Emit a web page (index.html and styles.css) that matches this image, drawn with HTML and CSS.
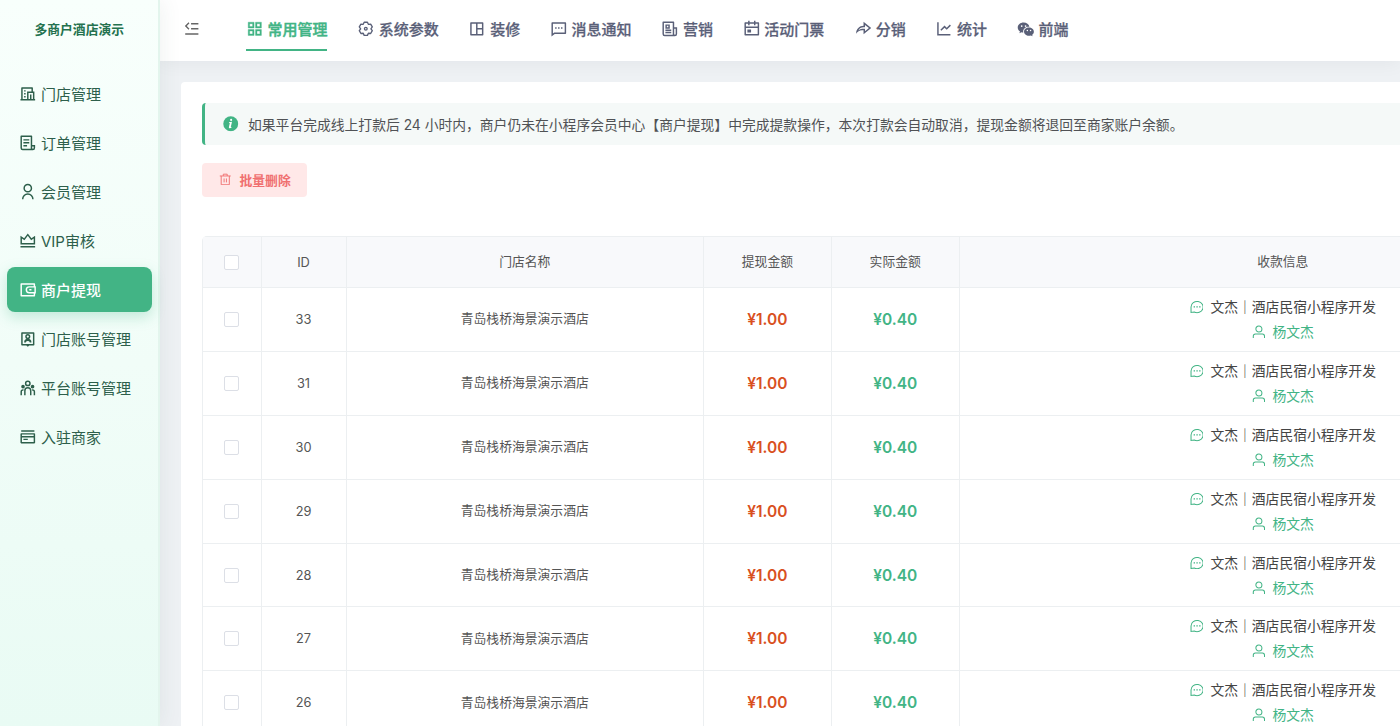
FILE: index.html
```html
<!DOCTYPE html>
<html lang="zh-CN">
<head>
  <meta charset="UTF-8">
  <title>商户提现</title>
  <link rel="stylesheet" href="styles.css">
</head>
<body>
  <svg class="sprite">
    <symbol id="i-fold" viewBox="0 0 24 24"><path d="M11 4h10v2H11zM11 11h10v2H11zM3 18h18v2H3zM7.500 3.200 8.800 4.600 5.200 8.200l3.600 3.600-1.300 1.400-5-5z"/></symbol>
    <symbol id="i-building" viewBox="0 0 24 24"><path d="M22 21H2v-2h1V4a1 1 0 0 1 1-1h14a1 1 0 0 1 1 1v5h2v10h1v2zm-5-2h2v-8h-6v8h2v-6h2v6zm0-10V5H5v14h6V9h6zM7 11h2v2H7v-2zm0 4h2v2H7v-2zm0-8h2v2H7V7z"/></symbol>
    <symbol id="i-bill" viewBox="0 0 24 24"><path d="M19 22H5a3 3 0 0 1-3-3V3a1 1 0 0 1 1-1h14a1 1 0 0 1 1 1v12h4v4a3 3 0 0 1-3 3zm-1-5v2a1 1 0 0 0 2 0v-2h-2zm-2 3V4H4v15a1 1 0 0 0 1 1h11zM6 7h8v2H6V7zm0 4h8v2H6v-2zm0 4h5v2H6v-2z"/></symbol>
    <symbol id="i-user" viewBox="0 0 24 24"><path d="M4 22a8 8 0 1 1 16 0h-2a6 6 0 1 0-12 0H4zm8-9c-3.315 0-6-2.685-6-6s2.685-6 6-6 6 2.685 6 6-2.685 6-6 6zm0-2c2.210 0 4-1.790 4-4s-1.790-4-4-4-4 1.790-4 4 1.790 4 4 4z"/></symbol>
    <symbol id="i-vip" viewBox="0 0 24 24"><path d="M2 19h20v2H2v-2zM2 5l5 3.500L12 2l5 6.500L22 5v12H2V5zm2 3.840V15h16V8.840l-3.420 2.390L12 5.280l-4.580 5.950L4 8.840z"/></symbol>
    <symbol id="i-wallet" viewBox="0 0 24 24"><path d="M22 7h1v10h-1v3a1 1 0 0 1-1 1H3a1 1 0 0 1-1-1V4a1 1 0 0 1 1-1h18a1 1 0 0 1 1 1v3zm-2 10h-6a5 5 0 0 1 0-10h6V5H4v14h16v-2zm1-2V9h-7a3 3 0 0 0 0 6h7zm-7-4h3v2h-3v-2z"/></symbol>
    <symbol id="i-badge" viewBox="0 0 24 24"><path d="M14 21l-2 2-2-2H4a1 1 0 0 1-1-1V4a1 1 0 0 1 1-1h16a1 1 0 0 1 1 1v16a1 1 0 0 1-1 1h-6zm5-2V5H5v14h14zM7 17a5 5 0 0 1 10 0h-2.200a3 3 0 0 0-5.600 0H7zm5-4.500a3.500 3.500 0 1 1 0-7 3.500 3.500 0 0 1 0 7zm0-2a1.500 1.500 0 1 0 0-3 1.500 1.500 0 0 0 0 3z"/></symbol>
    <symbol id="i-team" viewBox="0 0 24 24"><path d="M12 11a5 5 0 0 1 5 5v6h-2v-6a3 3 0 0 0-6 0v6H7v-6a5 5 0 0 1 5-5zm-6.500 3q.42 0 .81.090A6 6 0 0 0 6 16v.100A1.500 1.500 0 0 0 4 17.500V22H2v-4.500A3.500 3.500 0 0 1 5.500 14zm13 0a3.500 3.500 0 0 1 3.500 3.500V22h-2v-4.500a1.500 1.500 0 0 0-2-1.410V16q0-1-.310-1.910.4-.090.810-.090zM5.500 8a2.500 2.500 0 1 1 0 5 2.500 2.500 0 0 1 0-5zm13 0a2.500 2.500 0 1 1 0 5 2.500 2.500 0 0 1 0-5zM12 2a4 4 0 1 1 0 8 4 4 0 0 1 0-8zm0 2a2 2 0 1 0 0 4 2 2 0 0 0 0-4z"/></symbol>
    <symbol id="i-store" viewBox="0 0 24 24"><path fill-rule="evenodd" d="M3 3h18v2H3zM3 7h18l1 1v12l-1 1H3l-1-1V8zm1 2v2h16V9zm0 4v6h16v-6zm2 1.500h6v2H6z"/></symbol>
    <symbol id="i-function" viewBox="0 0 24 24"><path fill-rule="evenodd" d="M3 3h8v8H3zm2 2v4h4V5zM13 3h8v8h-8zm2 2v4h4V5zM3 13h8v8H3zm2 2v4h4v-4zM13 13h8v8h-8zm2 2v4h4v-4z"/></symbol>
    <symbol id="i-gear" viewBox="-1 -1 26 26"><path fill="none" stroke="currentColor" stroke-width="2" stroke-linejoin="round" d="M9.600 2.300h4.800L15.800 5.400 19.200 5.070 21.600 9.230 19.600 12 21.600 14.770 19.200 18.930 15.800 18.600 14.400 21.700H9.600L8.200 18.600 4.800 18.930 2.400 14.770 4.400 12 2.400 9.230 4.800 5.070 8.200 5.400z"/><circle cx="12" cy="12" r="2" fill="none" stroke="currentColor" stroke-width="2"/></symbol>
    <symbol id="i-layout" viewBox="0 0 24 24"><path fill-rule="evenodd" d="M4 3h16a1 1 0 0 1 1 1v16a1 1 0 0 1-1 1H4a1 1 0 0 1-1-1V4a1 1 0 0 1 1-1zm7 2H5v14h6zm2 0v6h6V5zm0 8v6h6v-6z"/></symbol>
    <symbol id="i-message" viewBox="0 0 24 24"><path d="M6.450 19 2 22.500V4a1 1 0 0 1 1-1h18a1 1 0 0 1 1 1v14a1 1 0 0 1-1 1H6.450zm-.690-2H20V5H4v13.380L5.760 17zM11 10h2v2h-2v-2zm-4 0h2v2H7v-2zm8 0h2v2h-2v-2z"/></symbol>
    <symbol id="i-news" viewBox="0 0 24 24"><path d="M16 20V4H4v15a1 1 0 0 0 1 1h11zm3 2H5a3 3 0 0 1-3-3V3a1 1 0 0 1 1-1h14a1 1 0 0 1 1 1v7h4v9a3 3 0 0 1-3 3zm-1-10v7a1 1 0 0 0 2 0v-7h-2zM6 6h6v6H6V6zm2 2v2h2V8H8zm-2 5h8v2H6v-2zm0 3h8v2H6v-2z"/></symbol>
    <symbol id="i-calendar" viewBox="0 0 24 24"><path d="M17 3h4a1 1 0 0 1 1 1v16a1 1 0 0 1-1 1H3a1 1 0 0 1-1-1V4a1 1 0 0 1 1-1h4V1h2v2h6V1h2v2zm3 6V5h-3v2h-2V5H9v2H7V5H4v4h16zm0 2H4v8h16v-8zM6 13h5v4H6v-4z"/></symbol>
    <symbol id="i-share" viewBox="0 0 24 24"><path d="M13 14h-2a9 9 0 0 0-7.970 4.810A10 10 0 0 1 3 18C3 12.480 7.480 8 13 8V2.500l10.500 8.500L13 19.500V14zm-2-2h4v3.310L20.320 11 15 6.690V10h-2a8 8 0 0 0-7.060 4.220A11 11 0 0 1 11 12z"/></symbol>
    <symbol id="i-chart" viewBox="0 0 24 24"><path d="M5 3v16h16v2H3V3h2zm15.300 3.300 1.400 1.400L16 13.420l-3-3-4.300 4.300-1.400-1.420L13 7.580l3 3 4.300-4.280z"/></symbol>
    <symbol id="i-wechat" viewBox="0 0 24 24"><path fill-rule="evenodd" d="M9 3.500c4.100 0 7.400 2.500 7.900 5.800h-.8c-4.300 0-7.700 2.900-7.700 6.400 0 .5.100 1 .2 1.400-1-.1-1.800-.2-2.600-.5L3.300 18l.7-2.500C2.200 14.300 1 12.500 1 10.500c0-3.900 3.500-7 8-7zM6.400 7a1.200 1.200 0 1 0 0 2.400 1.200 1.200 0 0 0 0-2.400zm5.300 0a1.200 1.200 0 1 0 0 2.400 1.200 1.200 0 0 0 0-2.400zM16.300 10.300c3.700 0 6.700 2.500 6.700 5.600 0 1.700-.9 3.200-2.300 4.200l.5 2-2.300-1.100c-.8.300-1.700.4-2.600.4-3.700 0-6.700-2.500-6.700-5.500s3-5.600 6.700-5.600zm-2.200 3a1 1 0 1 0 0 2 1 1 0 0 0 0-2zm4.400 0a1 1 0 1 0 0 2 1 1 0 0 0 0-2z"/></symbol>
    <symbol id="i-info" viewBox="0 0 16 16"><circle cx="8" cy="8" r="7.700"/><path fill="#fff" d="M8.400 2.900a1.100 1.100 0 1 1 0 2.200 1.100 1.100 0 0 1 0-2.200zM6.200 6.500 9.300 6 8.100 11.200c-.1.500.3.500 1 0l-.2.700c-1.500 1.300-3.200.9-2.800-.6l.9-3.700c.1-.4 0-.5-.9-.5z"/></symbol>
    <symbol id="i-trash" viewBox="0 0 16 16"><path fill="none" stroke="currentColor" stroke-width="1.200" d="M1 3.800h14M5.500 3.800V1.500h5v2.300M2.800 3.800v11.200h10.400V3.800M6.500 7v5M9.500 7v5"/></symbol>
    <symbol id="i-chat" viewBox="0 0 16 16"><path fill="none" stroke="currentColor" stroke-width="1.200" d="M1.200 14.500V8a7 6.500 0 1 1 3.700 5.900z"/><path d="M4.200 7.200h1.600v1.600H4.200zM7.400 7.200H9v1.600H7.400zM10.600 7.200h1.600v1.600h-1.600z"/></symbol>
    <symbol id="i-person" viewBox="0 0 16 16"><path fill="none" stroke="currentColor" stroke-width="1.200" d="M8 1.200a3.500 3.500 0 1 1 0 7 3.500 3.500 0 0 1 0-7zM1.500 15v-2a2.500 2.500 0 0 1 2.500-2.500h8a2.500 2.500 0 0 1 2.500 2.500v2"/></symbol>
  </svg>

  <div class="layout">
    <aside class="sidebar">
      <div class="logo">多商户酒店演示</div>
      <nav class="menu">
        <a class="menu-item"><svg class="icon"><use href="#i-building"/></svg>门店管理</a>
        <a class="menu-item"><svg class="icon"><use href="#i-bill"/></svg>订单管理</a>
        <a class="menu-item"><svg class="icon"><use href="#i-user"/></svg>会员管理</a>
        <a class="menu-item"><svg class="icon"><use href="#i-vip"/></svg>VIP审核</a>
        <a class="menu-item active"><svg class="icon"><use href="#i-wallet"/></svg>商户提现</a>
        <a class="menu-item"><svg class="icon"><use href="#i-badge"/></svg>门店账号管理</a>
        <a class="menu-item"><svg class="icon"><use href="#i-team"/></svg>平台账号管理</a>
        <a class="menu-item"><svg class="icon"><use href="#i-store"/></svg>入驻商家</a>
      </nav>
    </aside>

    <div class="main">
      <header class="topbar">
        <svg class="icon fold"><use href="#i-fold"/></svg>
        <nav class="tabs">
          <a class="tab active"><svg class="icon"><use href="#i-function"/></svg>常用管理</a>
          <a class="tab"><svg class="icon"><use href="#i-gear"/></svg>系统参数</a>
          <a class="tab"><svg class="icon"><use href="#i-layout"/></svg>装修</a>
          <a class="tab"><svg class="icon"><use href="#i-message"/></svg>消息通知</a>
          <a class="tab"><svg class="icon"><use href="#i-news"/></svg>营销</a>
          <a class="tab"><svg class="icon"><use href="#i-calendar"/></svg>活动门票</a>
          <a class="tab"><svg class="icon"><use href="#i-share"/></svg>分销</a>
          <a class="tab"><svg class="icon"><use href="#i-chart"/></svg>统计</a>
          <a class="tab"><svg class="icon"><use href="#i-wechat"/></svg>前端</a>
        </nav>
      </header>

      <section class="card">
        <div class="notice">
          <svg class="notice-icon"><use href="#i-info"/></svg>
          <span>如果平台完成线上打款后 24 小时内，商户仍未在小程序会员中心【商户提现】中完成提款操作，本次打款会自动取消，提现金额将退回至商家账户余额。</span>
        </div>
        <button class="delete-btn" type="button"><svg class="btn-icon"><use href="#i-trash"/></svg>批量删除</button>

        <table class="list">
          <colgroup><col class="c-check"><col class="c-id"><col class="c-name"><col class="c-money"><col class="c-money"><col class="c-payee"></colgroup>
          <thead>
            <tr><th><span class="check"></span></th><th>ID</th><th class="zh">门店名称</th><th class="zh">提现金额</th><th class="zh">实际金额</th><th class="zh">收款信息</th></tr>
          </thead>
          <tbody id="rows"></tbody>
        </table>
      </section>
    </div>
  </div>

  <script>
    const ids = [33, 31, 30, 29, 28, 27, 26];

    document.getElementById("rows").innerHTML = ids.map(id => `
      <tr>
        <td><span class="check"></span></td>
        <td>${id}</td>
        <td class="zh">青岛栈桥海景演示酒店</td>
        <td class="money apply">¥1.00</td>
        <td class="money actual">¥0.40</td>
        <td>
          <div class="payee"><svg><use href="#i-chat"/></svg><span>文杰｜酒店民宿小程序开发</span></div>
          <div class="payee name"><svg><use href="#i-person"/></svg><span>杨文杰</span></div>
        </td>
      </tr>`).join("");
  </script>
</body>
</html>
```
FILE: styles.css
```css
* {
  box-sizing: border-box;
}
body {
  margin: 0;
  height: 726px;
  overflow: hidden;
  font-family: Inter, "Noto Sans CJK SC", sans-serif;
  font-size: 15px;
  color: #555;
  background: #eef1f4;
}
svg {
  fill: currentColor;
  flex: none;
}
.sprite {
  display: none;
}
.icon {
  width: 17.6px;
  height: 17.6px;
}
.layout {
  display: flex;
  height: 726px;
}

/* 左侧菜单 */
.sidebar {
  flex: none;
  width: 160px;
  padding: 0 6px 0 6.5px;
  background: linear-gradient(180deg, #f8fffc 0%, #f1fdf8 50%, #e9fbf4 100%);
  border-right: 2px solid #e3f5ed;
  box-shadow: 2px 0 20px rgba(60, 90, 80, 0.08);
  z-index: 2;
}
.logo {
  height: 71px;
  padding: 0 0 14px;
  display: flex;
  align-items: center;
  justify-content: center;
  font-size: 12.8px;
  font-weight: bold;
  color: #24724f;
}
.menu {
  display: flex;
  flex-direction: column;
  gap: 4px;
}
.menu-item {
  display: flex;
  align-items: center;
  gap: 4.4px;
  height: 45px;
  padding-left: 12.5px;
  border-radius: 8px;
  color: #2d5f4b;
  white-space: nowrap;
}
.menu-item.active {
  color: #fff;
  font-weight: 500;
  background: #42b485;
  box-shadow: 0 5px 14px rgba(66, 180, 133, 0.28);
}

/* 顶部导航 */
.main {
  flex: 1;
  min-width: 0;
}
.topbar {
  display: flex;
  align-items: center;
  height: 61px;
  padding-left: 23px;
  background: #fff;
  box-shadow: 0 2px 18px rgba(0, 21, 41, 0.05);
}
.fold {
  margin: -3px 45px 0 0;
  color: #666;
}
.tabs {
  display: flex;
  gap: 29.6px;
}
.tab {
  display: flex;
  align-items: center;
  gap: 4.2px;
  height: 43px;
  margin-top: -2px;
  border-bottom: 2px solid transparent;
  font-weight: 500;
  -webkit-text-stroke: 0.25px;
  color: #5a6078;
  white-space: nowrap;
}
.tab.active {
  color: #42b485;
  border-bottom-color: #42b485;
  -webkit-text-stroke: 0.45px;
}
.tab.active .icon {
  stroke: currentColor;
  stroke-width: 0.5px;
}

/* 内容区 */
.card {
  width: 1450px;
  height: 700px;
  margin: 21px 0 0 21px;
  padding: 21px;
  background: #fff;
  border-radius: 4px;
}
.notice {
  display: flex;
  align-items: center;
  height: 42px;
  padding-left: 18px;
  border-left: 3px solid #42b485;
  border-radius: 4px;
  background: #f5f9f8;
  font-size: 13.8px;
  color: #505255;
  white-space: nowrap;
}
.notice-icon {
  width: 15.5px;
  height: 15.5px;
  margin-right: 9.5px;
  color: #42b485;
}
.delete-btn {
  display: flex;
  align-items: center;
  gap: 8px;
  width: 105px;
  height: 34px;
  margin: 18px 0 39px;
  padding: 0 0 2px 17px;
  border: 0;
  border-radius: 4px;
  background: #ffe8e8;
  color: #f07070;
  font-family: inherit;
  font-size: 12.8px;
  font-weight: bold;
}
.btn-icon {
  width: 12.5px;
  height: 12.5px;
}

.list {
  table-layout: fixed;
  width: 1405px;
  border-collapse: separate;
  border-spacing: 0;
  border: 1px solid #eceff1;
  border-right: 0;
  border-radius: 5px;
  font-size: 12.8px;
  text-align: center;
}
.c-check {
  width: 58.5px;
}
.c-id {
  width: 85px;
}
.c-name {
  width: 357.5px;
}
.c-money {
  width: 127.8px;
}
.list th,
.list td {
  padding: 0;
  border-right: 1px solid #eceff1;
  border-bottom: 1px solid #eceff1;
}
.list th {
  height: 51px;
  background: #f8f9fb;
  font-weight: normal;
}
.list td {
  height: 63.9px;
}
.list .zh {
  padding-bottom: 3px;
}
.check {
  display: block;
  width: 15px;
  height: 15px;
  margin: 0 auto;
  border: 1px solid #dcdfe6;
  border-radius: 2px;
  background: #fff;
}
.list .money {
  font-size: 15.5px;
  font-weight: 600;
}
.apply {
  color: #d9501e;
}
.actual {
  color: #42b485;
}
.payee {
  display: flex;
  align-items: center;
  justify-content: center;
  gap: 7px;
  height: 25px;
  font-size: 13.8px;
  color: #444;
}
.payee span {
  padding-bottom: 2px;
}
.payee svg {
  width: 13.8px;
  height: 13.8px;
  color: #42b485;
}
.payee.name {
  color: #42b485;
}
```
